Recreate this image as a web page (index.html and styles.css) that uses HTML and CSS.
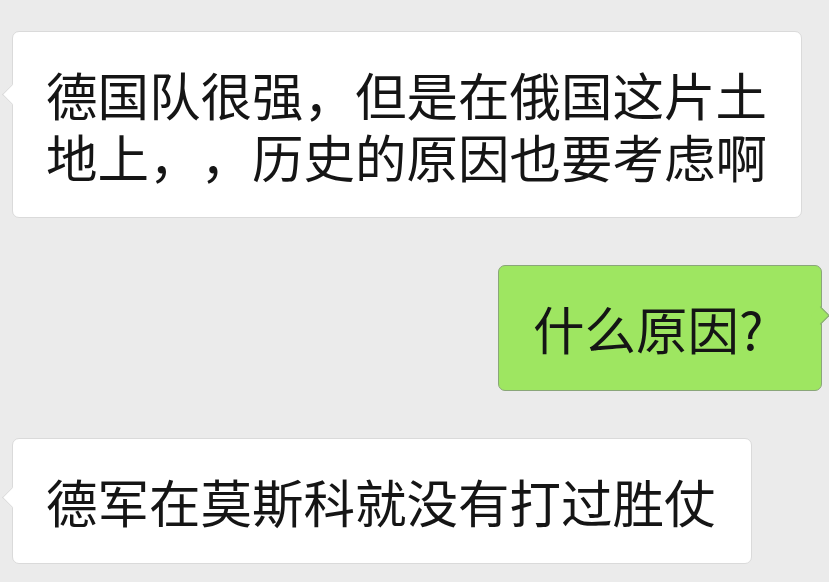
FILE: index.html
```html
<!DOCTYPE html>
<html lang="zh-CN">
<head>
<meta charset="utf-8">
<title>聊天记录</title>
<link rel="stylesheet" href="styles.css">
</head>
<body>

<div class="chat">
  <div class="row row-left">
    <div class="bubble bubble-in bubble-wide">德国队很强，但是在俄国这片土地上，，历史的原因也要考虑啊</div>
  </div>

  <div class="row row-right">
    <div class="bubble bubble-out">什么原因?</div>
  </div>

  <div class="row row-left">
    <div class="bubble bubble-in">德军在莫斯科就没有打过胜仗</div>
  </div>
</div>

</body>
</html>
```

FILE: styles.css
```css
body {
  margin: 0; /* full bleed screenshot */
  background: #ebebeb;
  font-family: "Noto Sans CJK SC", "Noto Sans", sans-serif;
  color: #151515;
}

.chat {
  display: flex;
  flex-direction: column;
  gap: 47px;
  padding: 31px 7px 0 12px;
}

.row {
  display: flex;
}

.row-left {
  justify-content: flex-start;
}

.row-right {
  justify-content: flex-end;
}

.bubble {
  position: relative;
  box-sizing: border-box;
  font-size: 51.5px;
  font-weight: 400;
  line-height: 62px;
  padding: 31px 35px 31px 33px;
  border-radius: 7px;
  text-spacing-trim: space-all; /* keep full-width commas */
}

/* incoming (white) bubbles */
.bubble-in {
  background: #fff;
  border: 1px solid #dadada;
}

.bubble-wide {
  width: 790px;
  padding-right: 28px;
  padding-bottom: 30px;
}

/* outgoing (green) bubble */
.bubble-out {
  width: 324px;
  padding: 31px 20px 31px 34px;
  background: #9ee661;
  border: 1px solid #8aa67a;
}

/* little pointer on the side of each bubble */
.bubble::before {
  content: "";
  position: absolute;
  top: 55px;
  width: 14px;
  height: 14px;
  transform: rotate(45deg);
}

.bubble-in::before {
  left: -8px;
  background: #fff;
  border-left: 1px solid #dadada;
  border-bottom: 1px solid #dadada;
}

.bubble-in:not(.bubble-wide)::before {
  top: 51px;
}

.bubble-out::before {
  top: 43px;
  right: -6px;
  width: 12px;
  height: 12px;
  background: #9ee661;
  border-right: 1px solid #8aa67a;
  border-top: 1px solid #8aa67a;
}
```
